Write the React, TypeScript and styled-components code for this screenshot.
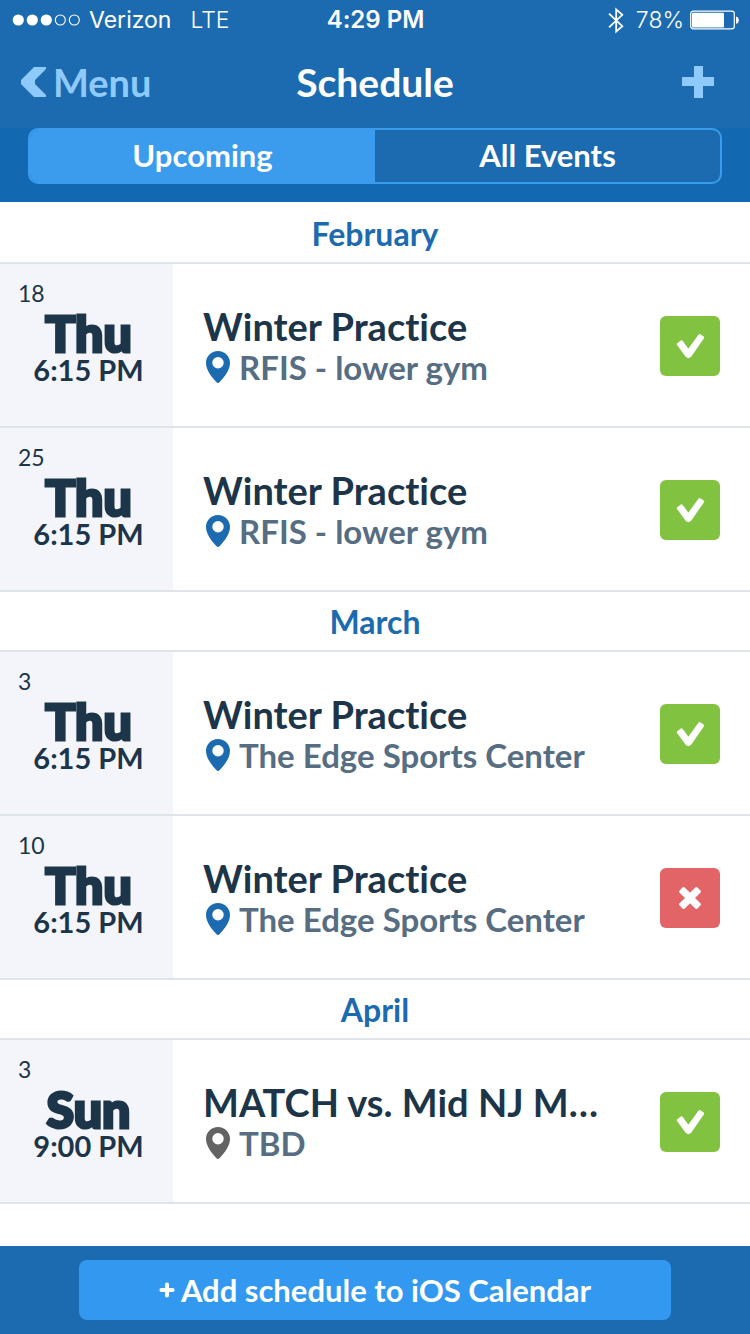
import React, { useState } from "react";
import styled, { createGlobalStyle } from "styled-components";

const color = {
  bar: "#1c6bb0",
  barDeep: "#1268b1",
  accent: "#3b9bed",
  action: "#3399f0",
  tint: "#8fcaff",
  ink: "#1d3549",
  muted: "#566d82",
  line: "#dfe3ea",
  cell: "#f4f5fa",
  yes: "#81c341",
  no: "#e26467",
};

const GlobalStyle = createGlobalStyle`
  *, *::before, *::after { box-sizing: border-box; }
  body {
    margin: 0;
    background: #fff;
    color: ${color.ink};
    font-family: Lato, "Open Sans", sans-serif;
    font-variant-ligatures: none;
  }
  h1, h2, h3, p, ul { margin: 0; padding: 0; }
  ul { list-style: none; }
  button { border: 0; padding: 0; background: none; font: inherit; color: inherit; cursor: pointer; }
`;

const Screen = styled.div`
  display: flex;
  flex-direction: column;
  min-height: 100vh;
`;

const StatusBar = styled.div`
  display: grid;
  grid-template-columns: 1fr auto 1fr;
  align-items: center;
  height: 40px;
  padding: 0 11px 0 12px;
  background: ${color.bar};
  color: #fff;
  font-family: Inter, sans-serif;
  font-size: 23px;
  line-height: 40px;
`;

const Carrier = styled.div`
  display: flex;
  align-items: center;
  gap: 8px;
`;

const Network = styled.span`
  margin-left: 11px;
  font-weight: 300;
`;

const Clock = styled.time`
  font-size: 24px;
  font-weight: 600;
`;

const Power = styled.div`
  display: flex;
  align-items: center;
  justify-content: flex-end;
  gap: 6px;
`;

const Percent = styled.span`
  margin-left: 6px;
  font-weight: 300;
`;

const NavBar = styled.header`
  display: grid;
  grid-template-columns: 1fr auto 1fr;
  align-items: center;
  height: 88px;
  padding: 0 20px 4px;
  background: ${color.bar};
`;

const BackLink = styled.a`
  display: flex;
  align-items: center;
  gap: 6px;
  color: ${color.tint};
  font-size: 38px;
  font-weight: 700;
  line-height: 44px;
  text-decoration: none;
`;

const Title = styled.h1`
  color: #fff;
  font-size: 39px;
  font-weight: 700;
  line-height: 44px;
`;

const AddButton = styled.button`
  display: flex;
  justify-self: end;
  margin-right: 16px;
  color: ${color.tint};
`;

const Filter = styled.div`
  padding: 0 28px 18px;
  background: ${color.barDeep};
`;

const Segments = styled.div`
  display: grid;
  grid-template-columns: 1fr 1fr;
  height: 56px;
  border: 2px solid ${color.accent};
  border-radius: 10px;
  background: ${color.bar};
  overflow: hidden;
`;

const Segment = styled.button<{ $active: boolean }>`
  padding-bottom: 2px;
  background: ${(p) => (p.$active ? color.accent : "transparent")};
  color: #fff;
  font-size: 31px;
  font-weight: 700;
  line-height: 36px;
`;

const Main = styled.main`
  flex: 1;
  padding-bottom: 42px;
`;

const Month = styled.section`
  border-bottom: 2px solid ${color.line};
  & + & { margin-top: -2px; }
`;

const MonthName = styled.h2`
  height: 60px;
  padding-top: 12px;
  color: ${color.bar};
  font-size: 32px;
  font-weight: 700;
  line-height: 40px;
  text-align: center;
`;

const EventRow = styled.li`
  display: flex;
  align-items: stretch;
  height: 164px;
  border-top: 2px solid ${color.line};
`;

const When = styled.div`
  display: flex;
  flex-direction: column;
  flex: none;
  width: 173px;
  padding: 14px 0 0 4px;
  background: ${color.cell};
  text-align: center;
`;

const DayNumber = styled.span`
  padding-left: 14px;
  font-size: 23px;
  line-height: 30px;
  text-align: left;
`;

const Weekday = styled.span`
  font-size: 50px;
  font-weight: 900;
  line-height: 50px;
  -webkit-text-stroke: 3px currentColor;
  stroke-linejoin: round;
`;

const Hour = styled.span`
  font-size: 29px;
  font-weight: 700;
  line-height: 24px;
`;

const What = styled.div`
  flex: 1;
  min-width: 0;
  padding: 40px 0 0 30px;
`;

const EventName = styled.h3`
  overflow: hidden;
  font-size: 38px;
  font-weight: 700;
  line-height: 44px;
  text-overflow: ellipsis;
  white-space: nowrap;
`;

const Place = styled.p`
  display: flex;
  align-items: center;
  gap: 9px;
  padding-left: 3px;
  color: ${color.muted};
  font-size: 33px;
  font-weight: 700;
  line-height: 38px;
`;

const Answer = styled.button<{ $going: boolean }>`
  display: flex;
  align-items: center;
  justify-content: center;
  flex: none;
  align-self: center;
  width: 60px;
  height: 60px;
  margin: 2px 30px 0 40px;
  border-radius: 6px;
  background: ${(p) => (p.$going ? color.yes : color.no)};
`;

const Footer = styled.footer`
  display: flex;
  justify-content: center;
  padding: 14px 79px;
  background: ${color.bar};
`;

const CalendarButton = styled.button`
  display: flex;
  align-items: center;
  justify-content: center;
  gap: 6px;
  flex: 1;
  height: 60px;
  border-radius: 8px;
  background: ${color.action};
  color: #fff;
  font-size: 31px;
  font-weight: 700;
`;

const Signal = () => (
  <svg width="69" height="12" viewBox="0 0 69 12" role="img" aria-label="Signal 3 of 5">
    {[0, 1, 2, 3, 4].map((n) => (
      <circle
        key={n}
        cx={6.3 + n * 14}
        cy="6"
        r={n < 3 ? 5.6 : 5}
        fill={n < 3 ? "#fff" : "none"}
        stroke="#fff"
        strokeWidth={n < 3 ? 0 : 1.1}
      />
    ))}
  </svg>
);

const Bluetooth = () => (
  <svg width="16" height="28" viewBox="0 0 16 28" fill="none" stroke="#fff" strokeWidth="1.8" role="img" aria-label="Bluetooth">
    <path d="M1 7.600 14.300 20.200 8.200 25.600V3.400L14.300 8.800 1 21.400" />
  </svg>
);

const Battery = () => (
  <svg width="49" height="20" viewBox="0 0 49 20" role="img" aria-label="Battery">
    <rect x="0.7" y="1.2" width="43.6" height="17.6" rx="2.6" fill="none" stroke="#fff" strokeWidth="1.2" />
    <rect x="2" y="2.8" width="32" height="14.6" rx="1" fill="#fff" />
    <path d="M46 6.600q2.800 .6 2.800 3.600t-2.800 3.600z" fill="#fff" />
  </svg>
);

const BackArrow = () => (
  <svg width="27" height="32" viewBox="0 0 27 32" aria-hidden="true">
    <path d="M14 1h12v2L15 14v4l11 11v2H14L1 18v-4z" fill={color.tint} />
  </svg>
);

const BigPlus = () => (
  <svg width="32" height="32" viewBox="0 0 32 32" aria-hidden="true">
    <path d="M12 0h9v11h11v9H21v12h-9V20H0v-9h12z" fill={color.tint} />
  </svg>
);

const SmallPlus = () => (
  <svg width="16" height="16" viewBox="0 0 16 16" stroke="#fff" strokeWidth="4" strokeLinecap="round" aria-hidden="true">
    <path d="M8 2.400v11.200M2.400 8h11.200" />
  </svg>
);

const Pin = ({ known }: { known: boolean }) => (
  <svg width="24" height="32" viewBox="0 0 24 32" aria-hidden="true">
    <path
      fillRule="evenodd"
      fill={known ? color.bar : "#636363"}
      d="M12 0C5.300 0 0 5.200 0 11.800c0 7.400 5.200 13.600 10.500 19.500q1.500 1.300 3 0C18.800 25.400 24 19.200 24 11.800 24 5.200 18.700 0 12 0zM12 6a5.700 5.700 0 1 1 0 11.400A5.700 5.700 0 0 1 12 6z"
    />
  </svg>
);

const Check = () => (
  <svg width="60" height="60" viewBox="0 0 60 60" fill="#fff" stroke="#fff" strokeWidth="2.400" strokeLinejoin="round" aria-hidden="true">
    <path d="M18 28.200 21.600 25.400 28.400 34.600 39.600 19.200 43 21.600 30 40.200Q28.400 41.600 26.800 40.200Z" />
  </svg>
);

const Cross = () => (
  <svg width="60" height="60" viewBox="0 0 60 60" fill="#fff" stroke="#fff" strokeWidth="2.400" strokeLinejoin="round" aria-hidden="true">
    <path d="M23.600 20.200 30 26.400 36.400 20.200 39.800 23.600 33.400 30 39.800 36.400 36.400 39.800 30 33.600 23.600 39.800 20.200 36.400 26.600 30 20.200 23.600Z" />
  </svg>
);

type Item = { date: string; weekday: string; time: string; name: string; place: string; known: boolean; going: boolean };

const practice = (date: string, place: string, going = true): Item => ({
  date,
  weekday: "Thu",
  time: "6:15 PM",
  name: "Winter Practice",
  place,
  known: true,
  going,
});

const schedule: { month: string; items: Item[] }[] = [
  { month: "February", items: [practice("18", "RFIS - lower gym"), practice("25", "RFIS - lower gym")] },
  { month: "March", items: [practice("3", "The Edge Sports Center"), practice("10", "The Edge Sports Center", false)] },
  {
    month: "April",
    items: [
      { date: "3", weekday: "Sun", time: "9:00 PM", name: "MATCH vs. Mid NJ M…", place: "TBD", known: false, going: true },
    ],
  },
];

function EventItem({ item }: { item: Item }) {
  const [going, setGoing] = useState(item.going);
  return (
    <EventRow>
      <When>
        <DayNumber>{item.date}</DayNumber>
        <Weekday>{item.weekday}</Weekday>
        <Hour>{item.time}</Hour>
      </When>
      <What>
        <EventName>{item.name}</EventName>
        <Place>
          <Pin known={item.known} />
          {item.place}
        </Place>
      </What>
      <Answer type="button" $going={going} aria-pressed={going} aria-label="Going" onClick={() => setGoing(!going)}>
        {going ? <Check /> : <Cross />}
      </Answer>
    </EventRow>
  );
}

export default function App() {
  const [tab, setTab] = useState("Upcoming");
  return (
    <Screen>
      <GlobalStyle />
      <StatusBar>
        <Carrier>
          <Signal />
          <span>Verizon</span>
          <Network>LTE</Network>
        </Carrier>
        <Clock>4:29 PM</Clock>
        <Power>
          <Bluetooth />
          <Percent>78%</Percent>
          <Battery />
        </Power>
      </StatusBar>
      <NavBar>
        <BackLink href="#menu">
          <BackArrow />
          Menu
        </BackLink>
        <Title>Schedule</Title>
        <AddButton type="button" aria-label="Add event">
          <BigPlus />
        </AddButton>
      </NavBar>
      <Filter>
        <Segments>
          {["Upcoming", "All Events"].map((name) => (
            <Segment key={name} type="button" $active={tab === name} aria-pressed={tab === name} onClick={() => setTab(name)}>
              {name}
            </Segment>
          ))}
        </Segments>
      </Filter>
      <Main>
        {schedule.map(({ month, items }) => (
          <Month key={month}>
            <MonthName>{month}</MonthName>
            <ul>
              {items.map((item) => (
                <EventItem key={item.date} item={item} />
              ))}
            </ul>
          </Month>
        ))}
      </Main>
      <Footer>
        <CalendarButton type="button">
          <SmallPlus />
          Add schedule to iOS Calendar
        </CalendarButton>
      </Footer>
    </Screen>
  );
}
